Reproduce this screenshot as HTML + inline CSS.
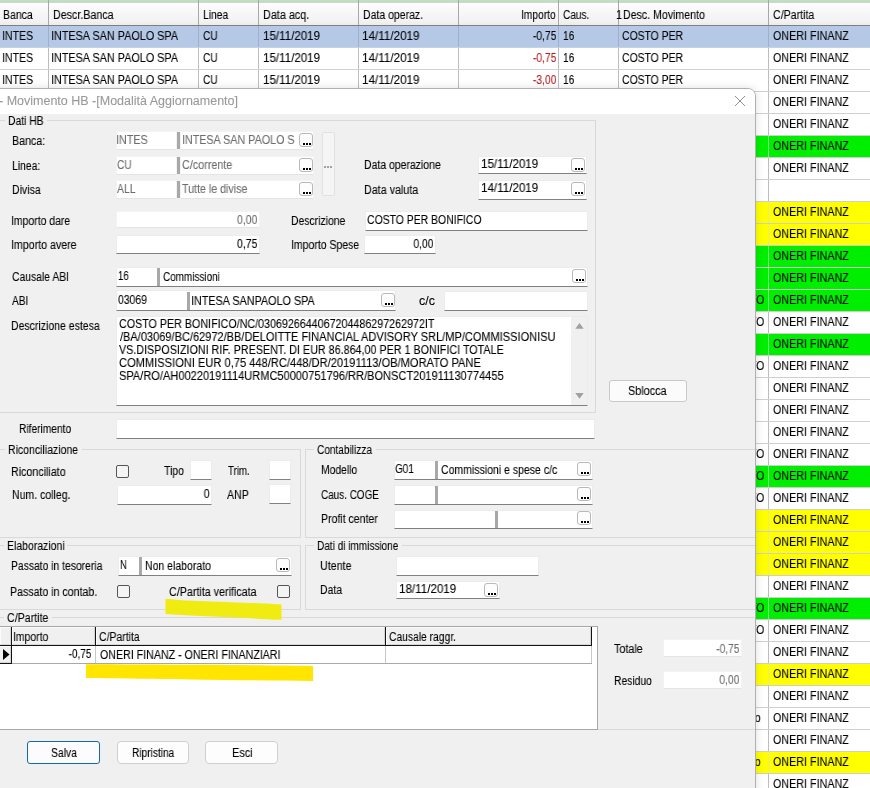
<!DOCTYPE html>
<html><head><meta charset="utf-8"><style>
*{margin:0;padding:0;box-sizing:border-box}
html,body{width:870px;height:788px;overflow:hidden;background:#fff}
body{position:relative;font-family:"Liberation Sans",sans-serif;font-size:12px;color:#000}
.t{position:absolute;white-space:pre;line-height:14px;transform-origin:0 0;-webkit-font-smoothing:antialiased;will-change:transform;-webkit-text-stroke:0.1px currentColor}
.b{position:absolute}
#dlg{position:absolute;left:-20px;top:88px;width:776px;height:720px;overflow:hidden;border-top-right-radius:8px;box-shadow:0 0 9px rgba(0,0,0,0.13);border:1px solid #b0b0b0;background:#fff}
#dlgin{position:absolute;left:19px;top:-89px;width:870px;height:900px}
</style></head>
<body>
<div class="b" style="left:0px;top:0px;width:870px;height:25px;background:linear-gradient(#ffffff,#f2f2f2 85%,#ececec);"></div>
<div class="b" style="left:0px;top:0px;width:870px;height:3px;background:#c4dcc4;"></div>
<div class="b" style="left:0px;top:25px;width:870px;height:1px;background:#7f7f7f;"></div>
<div class="b" style="left:48px;top:0px;width:1px;height:25px;background:#a8a8a8;"></div>
<div class="b" style="left:198px;top:0px;width:1px;height:25px;background:#a8a8a8;"></div>
<div class="b" style="left:258px;top:0px;width:1px;height:25px;background:#a8a8a8;"></div>
<div class="b" style="left:358px;top:0px;width:1px;height:25px;background:#a8a8a8;"></div>
<div class="b" style="left:458px;top:0px;width:1px;height:25px;background:#a8a8a8;"></div>
<div class="b" style="left:558px;top:0px;width:1px;height:25px;background:#a8a8a8;"></div>
<div class="b" style="left:618px;top:0px;width:1px;height:25px;background:#a8a8a8;"></div>
<div class="b" style="left:768px;top:0px;width:1px;height:25px;background:#a8a8a8;"></div>
<div class="t" style="top:8.00px;left:2.80px;transform:scaleX(0.8762);">Banca</div>
<div class="t" style="top:8.00px;left:52.90px;transform:scaleX(0.8909);">Descr.Banca</div>
<div class="t" style="top:8.00px;left:202.60px;transform:scaleX(0.8556);">Linea</div>
<div class="t" style="top:8.00px;left:262.60px;transform:scaleX(0.9014);">Data acq.</div>
<div class="t" style="top:8.00px;left:362.60px;transform:scaleX(0.8746);">Data operaz.</div>
<div class="t" style="top:8.00px;left:622.80px;transform:scaleX(0.8837);">Desc. Movimento</div>
<div class="t" style="top:8.00px;left:772.50px;transform:scaleX(0.8828);">C/Partita</div>
<div class="t" style="top:8.00px;left:562.50px;transform:scaleX(0.8383);">Caus.</div>
<div class="t" style="top:8.00px;right:314.38px;transform:scaleX(0.8523);transform-origin:100% 0;">Importo</div>
<div class="t" style="top:8.00px;left:616.00px;transform:scaleX(0.9000);">1</div>
<div class="b" style="left:0px;top:26px;width:870px;height:21px;background:#b5c9e7;"></div>
<div class="b" style="left:0px;top:47px;width:870px;height:1px;background:#c4d2e6;"></div>
<div class="b" style="left:48px;top:26px;width:1px;height:21px;background:rgba(0,0,0,0.12);"></div>
<div class="b" style="left:198px;top:26px;width:1px;height:21px;background:rgba(0,0,0,0.12);"></div>
<div class="b" style="left:258px;top:26px;width:1px;height:21px;background:rgba(0,0,0,0.12);"></div>
<div class="b" style="left:358px;top:26px;width:1px;height:21px;background:rgba(0,0,0,0.12);"></div>
<div class="b" style="left:458px;top:26px;width:1px;height:21px;background:rgba(0,0,0,0.12);"></div>
<div class="b" style="left:558px;top:26px;width:1px;height:21px;background:rgba(0,0,0,0.12);"></div>
<div class="b" style="left:618px;top:26px;width:1px;height:21px;background:rgba(0,0,0,0.12);"></div>
<div class="b" style="left:768px;top:26px;width:1px;height:21px;background:rgba(0,0,0,0.12);"></div>
<div class="b" style="left:0px;top:48px;width:870px;height:21px;background:#ffffff;"></div>
<div class="b" style="left:0px;top:69px;width:870px;height:1px;background:#d0d0d0;"></div>
<div class="b" style="left:48px;top:48px;width:1px;height:21px;background:#bdbdbd;"></div>
<div class="b" style="left:198px;top:48px;width:1px;height:21px;background:#bdbdbd;"></div>
<div class="b" style="left:258px;top:48px;width:1px;height:21px;background:#bdbdbd;"></div>
<div class="b" style="left:358px;top:48px;width:1px;height:21px;background:#bdbdbd;"></div>
<div class="b" style="left:458px;top:48px;width:1px;height:21px;background:#bdbdbd;"></div>
<div class="b" style="left:558px;top:48px;width:1px;height:21px;background:#bdbdbd;"></div>
<div class="b" style="left:618px;top:48px;width:1px;height:21px;background:#bdbdbd;"></div>
<div class="b" style="left:768px;top:48px;width:1px;height:21px;background:#bdbdbd;"></div>
<div class="b" style="left:0px;top:70px;width:870px;height:21px;background:#ffffff;"></div>
<div class="b" style="left:0px;top:91px;width:870px;height:1px;background:#d0d0d0;"></div>
<div class="b" style="left:48px;top:70px;width:1px;height:21px;background:#bdbdbd;"></div>
<div class="b" style="left:198px;top:70px;width:1px;height:21px;background:#bdbdbd;"></div>
<div class="b" style="left:258px;top:70px;width:1px;height:21px;background:#bdbdbd;"></div>
<div class="b" style="left:358px;top:70px;width:1px;height:21px;background:#bdbdbd;"></div>
<div class="b" style="left:458px;top:70px;width:1px;height:21px;background:#bdbdbd;"></div>
<div class="b" style="left:558px;top:70px;width:1px;height:21px;background:#bdbdbd;"></div>
<div class="b" style="left:618px;top:70px;width:1px;height:21px;background:#bdbdbd;"></div>
<div class="b" style="left:768px;top:70px;width:1px;height:21px;background:#bdbdbd;"></div>
<div class="b" style="left:0px;top:92px;width:870px;height:21px;background:#ffffff;"></div>
<div class="b" style="left:0px;top:113px;width:870px;height:1px;background:#d0d0d0;"></div>
<div class="b" style="left:48px;top:92px;width:1px;height:21px;background:#bdbdbd;"></div>
<div class="b" style="left:198px;top:92px;width:1px;height:21px;background:#bdbdbd;"></div>
<div class="b" style="left:258px;top:92px;width:1px;height:21px;background:#bdbdbd;"></div>
<div class="b" style="left:358px;top:92px;width:1px;height:21px;background:#bdbdbd;"></div>
<div class="b" style="left:458px;top:92px;width:1px;height:21px;background:#bdbdbd;"></div>
<div class="b" style="left:558px;top:92px;width:1px;height:21px;background:#bdbdbd;"></div>
<div class="b" style="left:618px;top:92px;width:1px;height:21px;background:#bdbdbd;"></div>
<div class="b" style="left:768px;top:92px;width:1px;height:21px;background:#bdbdbd;"></div>
<div class="b" style="left:0px;top:114px;width:870px;height:21px;background:#ffffff;"></div>
<div class="b" style="left:0px;top:135px;width:870px;height:1px;background:#d0d0d0;"></div>
<div class="b" style="left:48px;top:114px;width:1px;height:21px;background:#bdbdbd;"></div>
<div class="b" style="left:198px;top:114px;width:1px;height:21px;background:#bdbdbd;"></div>
<div class="b" style="left:258px;top:114px;width:1px;height:21px;background:#bdbdbd;"></div>
<div class="b" style="left:358px;top:114px;width:1px;height:21px;background:#bdbdbd;"></div>
<div class="b" style="left:458px;top:114px;width:1px;height:21px;background:#bdbdbd;"></div>
<div class="b" style="left:558px;top:114px;width:1px;height:21px;background:#bdbdbd;"></div>
<div class="b" style="left:618px;top:114px;width:1px;height:21px;background:#bdbdbd;"></div>
<div class="b" style="left:768px;top:114px;width:1px;height:21px;background:#bdbdbd;"></div>
<div class="b" style="left:0px;top:136px;width:870px;height:21px;background:#00ef00;"></div>
<div class="b" style="left:0px;top:157px;width:870px;height:1px;background:rgba(190,190,190,0.75);"></div>
<div class="b" style="left:48px;top:136px;width:1px;height:21px;background:rgba(220,220,220,0.6);"></div>
<div class="b" style="left:198px;top:136px;width:1px;height:21px;background:rgba(220,220,220,0.6);"></div>
<div class="b" style="left:258px;top:136px;width:1px;height:21px;background:rgba(220,220,220,0.6);"></div>
<div class="b" style="left:358px;top:136px;width:1px;height:21px;background:rgba(220,220,220,0.6);"></div>
<div class="b" style="left:458px;top:136px;width:1px;height:21px;background:rgba(220,220,220,0.6);"></div>
<div class="b" style="left:558px;top:136px;width:1px;height:21px;background:rgba(220,220,220,0.6);"></div>
<div class="b" style="left:618px;top:136px;width:1px;height:21px;background:rgba(220,220,220,0.6);"></div>
<div class="b" style="left:768px;top:136px;width:1px;height:21px;background:rgba(220,220,220,0.6);"></div>
<div class="b" style="left:0px;top:158px;width:870px;height:21px;background:#ffffff;"></div>
<div class="b" style="left:0px;top:179px;width:870px;height:1px;background:#d0d0d0;"></div>
<div class="b" style="left:48px;top:158px;width:1px;height:21px;background:#bdbdbd;"></div>
<div class="b" style="left:198px;top:158px;width:1px;height:21px;background:#bdbdbd;"></div>
<div class="b" style="left:258px;top:158px;width:1px;height:21px;background:#bdbdbd;"></div>
<div class="b" style="left:358px;top:158px;width:1px;height:21px;background:#bdbdbd;"></div>
<div class="b" style="left:458px;top:158px;width:1px;height:21px;background:#bdbdbd;"></div>
<div class="b" style="left:558px;top:158px;width:1px;height:21px;background:#bdbdbd;"></div>
<div class="b" style="left:618px;top:158px;width:1px;height:21px;background:#bdbdbd;"></div>
<div class="b" style="left:768px;top:158px;width:1px;height:21px;background:#bdbdbd;"></div>
<div class="b" style="left:0px;top:180px;width:870px;height:21px;background:#ffffff;"></div>
<div class="b" style="left:0px;top:201px;width:870px;height:1px;background:#d0d0d0;"></div>
<div class="b" style="left:48px;top:180px;width:1px;height:21px;background:#bdbdbd;"></div>
<div class="b" style="left:198px;top:180px;width:1px;height:21px;background:#bdbdbd;"></div>
<div class="b" style="left:258px;top:180px;width:1px;height:21px;background:#bdbdbd;"></div>
<div class="b" style="left:358px;top:180px;width:1px;height:21px;background:#bdbdbd;"></div>
<div class="b" style="left:458px;top:180px;width:1px;height:21px;background:#bdbdbd;"></div>
<div class="b" style="left:558px;top:180px;width:1px;height:21px;background:#bdbdbd;"></div>
<div class="b" style="left:618px;top:180px;width:1px;height:21px;background:#bdbdbd;"></div>
<div class="b" style="left:768px;top:180px;width:1px;height:21px;background:#bdbdbd;"></div>
<div class="b" style="left:0px;top:202px;width:870px;height:21px;background:#ffff00;"></div>
<div class="b" style="left:0px;top:223px;width:870px;height:1px;background:rgba(190,190,190,0.75);"></div>
<div class="b" style="left:48px;top:202px;width:1px;height:21px;background:rgba(220,220,220,0.6);"></div>
<div class="b" style="left:198px;top:202px;width:1px;height:21px;background:rgba(220,220,220,0.6);"></div>
<div class="b" style="left:258px;top:202px;width:1px;height:21px;background:rgba(220,220,220,0.6);"></div>
<div class="b" style="left:358px;top:202px;width:1px;height:21px;background:rgba(220,220,220,0.6);"></div>
<div class="b" style="left:458px;top:202px;width:1px;height:21px;background:rgba(220,220,220,0.6);"></div>
<div class="b" style="left:558px;top:202px;width:1px;height:21px;background:rgba(220,220,220,0.6);"></div>
<div class="b" style="left:618px;top:202px;width:1px;height:21px;background:rgba(220,220,220,0.6);"></div>
<div class="b" style="left:768px;top:202px;width:1px;height:21px;background:rgba(220,220,220,0.6);"></div>
<div class="b" style="left:0px;top:224px;width:870px;height:21px;background:#ffff00;"></div>
<div class="b" style="left:0px;top:245px;width:870px;height:1px;background:rgba(190,190,190,0.75);"></div>
<div class="b" style="left:48px;top:224px;width:1px;height:21px;background:rgba(220,220,220,0.6);"></div>
<div class="b" style="left:198px;top:224px;width:1px;height:21px;background:rgba(220,220,220,0.6);"></div>
<div class="b" style="left:258px;top:224px;width:1px;height:21px;background:rgba(220,220,220,0.6);"></div>
<div class="b" style="left:358px;top:224px;width:1px;height:21px;background:rgba(220,220,220,0.6);"></div>
<div class="b" style="left:458px;top:224px;width:1px;height:21px;background:rgba(220,220,220,0.6);"></div>
<div class="b" style="left:558px;top:224px;width:1px;height:21px;background:rgba(220,220,220,0.6);"></div>
<div class="b" style="left:618px;top:224px;width:1px;height:21px;background:rgba(220,220,220,0.6);"></div>
<div class="b" style="left:768px;top:224px;width:1px;height:21px;background:rgba(220,220,220,0.6);"></div>
<div class="b" style="left:0px;top:246px;width:870px;height:21px;background:#00ef00;"></div>
<div class="b" style="left:0px;top:267px;width:870px;height:1px;background:rgba(190,190,190,0.75);"></div>
<div class="b" style="left:48px;top:246px;width:1px;height:21px;background:rgba(220,220,220,0.6);"></div>
<div class="b" style="left:198px;top:246px;width:1px;height:21px;background:rgba(220,220,220,0.6);"></div>
<div class="b" style="left:258px;top:246px;width:1px;height:21px;background:rgba(220,220,220,0.6);"></div>
<div class="b" style="left:358px;top:246px;width:1px;height:21px;background:rgba(220,220,220,0.6);"></div>
<div class="b" style="left:458px;top:246px;width:1px;height:21px;background:rgba(220,220,220,0.6);"></div>
<div class="b" style="left:558px;top:246px;width:1px;height:21px;background:rgba(220,220,220,0.6);"></div>
<div class="b" style="left:618px;top:246px;width:1px;height:21px;background:rgba(220,220,220,0.6);"></div>
<div class="b" style="left:768px;top:246px;width:1px;height:21px;background:rgba(220,220,220,0.6);"></div>
<div class="b" style="left:0px;top:268px;width:870px;height:21px;background:#00ef00;"></div>
<div class="b" style="left:0px;top:289px;width:870px;height:1px;background:rgba(190,190,190,0.75);"></div>
<div class="b" style="left:48px;top:268px;width:1px;height:21px;background:rgba(220,220,220,0.6);"></div>
<div class="b" style="left:198px;top:268px;width:1px;height:21px;background:rgba(220,220,220,0.6);"></div>
<div class="b" style="left:258px;top:268px;width:1px;height:21px;background:rgba(220,220,220,0.6);"></div>
<div class="b" style="left:358px;top:268px;width:1px;height:21px;background:rgba(220,220,220,0.6);"></div>
<div class="b" style="left:458px;top:268px;width:1px;height:21px;background:rgba(220,220,220,0.6);"></div>
<div class="b" style="left:558px;top:268px;width:1px;height:21px;background:rgba(220,220,220,0.6);"></div>
<div class="b" style="left:618px;top:268px;width:1px;height:21px;background:rgba(220,220,220,0.6);"></div>
<div class="b" style="left:768px;top:268px;width:1px;height:21px;background:rgba(220,220,220,0.6);"></div>
<div class="b" style="left:0px;top:290px;width:870px;height:21px;background:#00ef00;"></div>
<div class="b" style="left:0px;top:311px;width:870px;height:1px;background:rgba(190,190,190,0.75);"></div>
<div class="b" style="left:48px;top:290px;width:1px;height:21px;background:rgba(220,220,220,0.6);"></div>
<div class="b" style="left:198px;top:290px;width:1px;height:21px;background:rgba(220,220,220,0.6);"></div>
<div class="b" style="left:258px;top:290px;width:1px;height:21px;background:rgba(220,220,220,0.6);"></div>
<div class="b" style="left:358px;top:290px;width:1px;height:21px;background:rgba(220,220,220,0.6);"></div>
<div class="b" style="left:458px;top:290px;width:1px;height:21px;background:rgba(220,220,220,0.6);"></div>
<div class="b" style="left:558px;top:290px;width:1px;height:21px;background:rgba(220,220,220,0.6);"></div>
<div class="b" style="left:618px;top:290px;width:1px;height:21px;background:rgba(220,220,220,0.6);"></div>
<div class="b" style="left:768px;top:290px;width:1px;height:21px;background:rgba(220,220,220,0.6);"></div>
<div class="b" style="left:0px;top:312px;width:870px;height:21px;background:#ffffff;"></div>
<div class="b" style="left:0px;top:333px;width:870px;height:1px;background:#d0d0d0;"></div>
<div class="b" style="left:48px;top:312px;width:1px;height:21px;background:#bdbdbd;"></div>
<div class="b" style="left:198px;top:312px;width:1px;height:21px;background:#bdbdbd;"></div>
<div class="b" style="left:258px;top:312px;width:1px;height:21px;background:#bdbdbd;"></div>
<div class="b" style="left:358px;top:312px;width:1px;height:21px;background:#bdbdbd;"></div>
<div class="b" style="left:458px;top:312px;width:1px;height:21px;background:#bdbdbd;"></div>
<div class="b" style="left:558px;top:312px;width:1px;height:21px;background:#bdbdbd;"></div>
<div class="b" style="left:618px;top:312px;width:1px;height:21px;background:#bdbdbd;"></div>
<div class="b" style="left:768px;top:312px;width:1px;height:21px;background:#bdbdbd;"></div>
<div class="b" style="left:0px;top:334px;width:870px;height:21px;background:#00ef00;"></div>
<div class="b" style="left:0px;top:355px;width:870px;height:1px;background:rgba(190,190,190,0.75);"></div>
<div class="b" style="left:48px;top:334px;width:1px;height:21px;background:rgba(220,220,220,0.6);"></div>
<div class="b" style="left:198px;top:334px;width:1px;height:21px;background:rgba(220,220,220,0.6);"></div>
<div class="b" style="left:258px;top:334px;width:1px;height:21px;background:rgba(220,220,220,0.6);"></div>
<div class="b" style="left:358px;top:334px;width:1px;height:21px;background:rgba(220,220,220,0.6);"></div>
<div class="b" style="left:458px;top:334px;width:1px;height:21px;background:rgba(220,220,220,0.6);"></div>
<div class="b" style="left:558px;top:334px;width:1px;height:21px;background:rgba(220,220,220,0.6);"></div>
<div class="b" style="left:618px;top:334px;width:1px;height:21px;background:rgba(220,220,220,0.6);"></div>
<div class="b" style="left:768px;top:334px;width:1px;height:21px;background:rgba(220,220,220,0.6);"></div>
<div class="b" style="left:0px;top:356px;width:870px;height:21px;background:#ffffff;"></div>
<div class="b" style="left:0px;top:377px;width:870px;height:1px;background:#d0d0d0;"></div>
<div class="b" style="left:48px;top:356px;width:1px;height:21px;background:#bdbdbd;"></div>
<div class="b" style="left:198px;top:356px;width:1px;height:21px;background:#bdbdbd;"></div>
<div class="b" style="left:258px;top:356px;width:1px;height:21px;background:#bdbdbd;"></div>
<div class="b" style="left:358px;top:356px;width:1px;height:21px;background:#bdbdbd;"></div>
<div class="b" style="left:458px;top:356px;width:1px;height:21px;background:#bdbdbd;"></div>
<div class="b" style="left:558px;top:356px;width:1px;height:21px;background:#bdbdbd;"></div>
<div class="b" style="left:618px;top:356px;width:1px;height:21px;background:#bdbdbd;"></div>
<div class="b" style="left:768px;top:356px;width:1px;height:21px;background:#bdbdbd;"></div>
<div class="b" style="left:0px;top:378px;width:870px;height:21px;background:#ffffff;"></div>
<div class="b" style="left:0px;top:399px;width:870px;height:1px;background:#d0d0d0;"></div>
<div class="b" style="left:48px;top:378px;width:1px;height:21px;background:#bdbdbd;"></div>
<div class="b" style="left:198px;top:378px;width:1px;height:21px;background:#bdbdbd;"></div>
<div class="b" style="left:258px;top:378px;width:1px;height:21px;background:#bdbdbd;"></div>
<div class="b" style="left:358px;top:378px;width:1px;height:21px;background:#bdbdbd;"></div>
<div class="b" style="left:458px;top:378px;width:1px;height:21px;background:#bdbdbd;"></div>
<div class="b" style="left:558px;top:378px;width:1px;height:21px;background:#bdbdbd;"></div>
<div class="b" style="left:618px;top:378px;width:1px;height:21px;background:#bdbdbd;"></div>
<div class="b" style="left:768px;top:378px;width:1px;height:21px;background:#bdbdbd;"></div>
<div class="b" style="left:0px;top:400px;width:870px;height:21px;background:#ffffff;"></div>
<div class="b" style="left:0px;top:421px;width:870px;height:1px;background:#d0d0d0;"></div>
<div class="b" style="left:48px;top:400px;width:1px;height:21px;background:#bdbdbd;"></div>
<div class="b" style="left:198px;top:400px;width:1px;height:21px;background:#bdbdbd;"></div>
<div class="b" style="left:258px;top:400px;width:1px;height:21px;background:#bdbdbd;"></div>
<div class="b" style="left:358px;top:400px;width:1px;height:21px;background:#bdbdbd;"></div>
<div class="b" style="left:458px;top:400px;width:1px;height:21px;background:#bdbdbd;"></div>
<div class="b" style="left:558px;top:400px;width:1px;height:21px;background:#bdbdbd;"></div>
<div class="b" style="left:618px;top:400px;width:1px;height:21px;background:#bdbdbd;"></div>
<div class="b" style="left:768px;top:400px;width:1px;height:21px;background:#bdbdbd;"></div>
<div class="b" style="left:0px;top:422px;width:870px;height:21px;background:#ffffff;"></div>
<div class="b" style="left:0px;top:443px;width:870px;height:1px;background:#d0d0d0;"></div>
<div class="b" style="left:48px;top:422px;width:1px;height:21px;background:#bdbdbd;"></div>
<div class="b" style="left:198px;top:422px;width:1px;height:21px;background:#bdbdbd;"></div>
<div class="b" style="left:258px;top:422px;width:1px;height:21px;background:#bdbdbd;"></div>
<div class="b" style="left:358px;top:422px;width:1px;height:21px;background:#bdbdbd;"></div>
<div class="b" style="left:458px;top:422px;width:1px;height:21px;background:#bdbdbd;"></div>
<div class="b" style="left:558px;top:422px;width:1px;height:21px;background:#bdbdbd;"></div>
<div class="b" style="left:618px;top:422px;width:1px;height:21px;background:#bdbdbd;"></div>
<div class="b" style="left:768px;top:422px;width:1px;height:21px;background:#bdbdbd;"></div>
<div class="b" style="left:0px;top:444px;width:870px;height:21px;background:#ffffff;"></div>
<div class="b" style="left:0px;top:465px;width:870px;height:1px;background:#d0d0d0;"></div>
<div class="b" style="left:48px;top:444px;width:1px;height:21px;background:#bdbdbd;"></div>
<div class="b" style="left:198px;top:444px;width:1px;height:21px;background:#bdbdbd;"></div>
<div class="b" style="left:258px;top:444px;width:1px;height:21px;background:#bdbdbd;"></div>
<div class="b" style="left:358px;top:444px;width:1px;height:21px;background:#bdbdbd;"></div>
<div class="b" style="left:458px;top:444px;width:1px;height:21px;background:#bdbdbd;"></div>
<div class="b" style="left:558px;top:444px;width:1px;height:21px;background:#bdbdbd;"></div>
<div class="b" style="left:618px;top:444px;width:1px;height:21px;background:#bdbdbd;"></div>
<div class="b" style="left:768px;top:444px;width:1px;height:21px;background:#bdbdbd;"></div>
<div class="b" style="left:0px;top:466px;width:870px;height:21px;background:#00ef00;"></div>
<div class="b" style="left:0px;top:487px;width:870px;height:1px;background:rgba(190,190,190,0.75);"></div>
<div class="b" style="left:48px;top:466px;width:1px;height:21px;background:rgba(220,220,220,0.6);"></div>
<div class="b" style="left:198px;top:466px;width:1px;height:21px;background:rgba(220,220,220,0.6);"></div>
<div class="b" style="left:258px;top:466px;width:1px;height:21px;background:rgba(220,220,220,0.6);"></div>
<div class="b" style="left:358px;top:466px;width:1px;height:21px;background:rgba(220,220,220,0.6);"></div>
<div class="b" style="left:458px;top:466px;width:1px;height:21px;background:rgba(220,220,220,0.6);"></div>
<div class="b" style="left:558px;top:466px;width:1px;height:21px;background:rgba(220,220,220,0.6);"></div>
<div class="b" style="left:618px;top:466px;width:1px;height:21px;background:rgba(220,220,220,0.6);"></div>
<div class="b" style="left:768px;top:466px;width:1px;height:21px;background:rgba(220,220,220,0.6);"></div>
<div class="b" style="left:0px;top:488px;width:870px;height:21px;background:#ffffff;"></div>
<div class="b" style="left:0px;top:509px;width:870px;height:1px;background:#d0d0d0;"></div>
<div class="b" style="left:48px;top:488px;width:1px;height:21px;background:#bdbdbd;"></div>
<div class="b" style="left:198px;top:488px;width:1px;height:21px;background:#bdbdbd;"></div>
<div class="b" style="left:258px;top:488px;width:1px;height:21px;background:#bdbdbd;"></div>
<div class="b" style="left:358px;top:488px;width:1px;height:21px;background:#bdbdbd;"></div>
<div class="b" style="left:458px;top:488px;width:1px;height:21px;background:#bdbdbd;"></div>
<div class="b" style="left:558px;top:488px;width:1px;height:21px;background:#bdbdbd;"></div>
<div class="b" style="left:618px;top:488px;width:1px;height:21px;background:#bdbdbd;"></div>
<div class="b" style="left:768px;top:488px;width:1px;height:21px;background:#bdbdbd;"></div>
<div class="b" style="left:0px;top:510px;width:870px;height:21px;background:#ffff00;"></div>
<div class="b" style="left:0px;top:531px;width:870px;height:1px;background:rgba(190,190,190,0.75);"></div>
<div class="b" style="left:48px;top:510px;width:1px;height:21px;background:rgba(220,220,220,0.6);"></div>
<div class="b" style="left:198px;top:510px;width:1px;height:21px;background:rgba(220,220,220,0.6);"></div>
<div class="b" style="left:258px;top:510px;width:1px;height:21px;background:rgba(220,220,220,0.6);"></div>
<div class="b" style="left:358px;top:510px;width:1px;height:21px;background:rgba(220,220,220,0.6);"></div>
<div class="b" style="left:458px;top:510px;width:1px;height:21px;background:rgba(220,220,220,0.6);"></div>
<div class="b" style="left:558px;top:510px;width:1px;height:21px;background:rgba(220,220,220,0.6);"></div>
<div class="b" style="left:618px;top:510px;width:1px;height:21px;background:rgba(220,220,220,0.6);"></div>
<div class="b" style="left:768px;top:510px;width:1px;height:21px;background:rgba(220,220,220,0.6);"></div>
<div class="b" style="left:0px;top:532px;width:870px;height:21px;background:#ffff00;"></div>
<div class="b" style="left:0px;top:553px;width:870px;height:1px;background:rgba(190,190,190,0.75);"></div>
<div class="b" style="left:48px;top:532px;width:1px;height:21px;background:rgba(220,220,220,0.6);"></div>
<div class="b" style="left:198px;top:532px;width:1px;height:21px;background:rgba(220,220,220,0.6);"></div>
<div class="b" style="left:258px;top:532px;width:1px;height:21px;background:rgba(220,220,220,0.6);"></div>
<div class="b" style="left:358px;top:532px;width:1px;height:21px;background:rgba(220,220,220,0.6);"></div>
<div class="b" style="left:458px;top:532px;width:1px;height:21px;background:rgba(220,220,220,0.6);"></div>
<div class="b" style="left:558px;top:532px;width:1px;height:21px;background:rgba(220,220,220,0.6);"></div>
<div class="b" style="left:618px;top:532px;width:1px;height:21px;background:rgba(220,220,220,0.6);"></div>
<div class="b" style="left:768px;top:532px;width:1px;height:21px;background:rgba(220,220,220,0.6);"></div>
<div class="b" style="left:0px;top:554px;width:870px;height:21px;background:#ffff00;"></div>
<div class="b" style="left:0px;top:575px;width:870px;height:1px;background:rgba(190,190,190,0.75);"></div>
<div class="b" style="left:48px;top:554px;width:1px;height:21px;background:rgba(220,220,220,0.6);"></div>
<div class="b" style="left:198px;top:554px;width:1px;height:21px;background:rgba(220,220,220,0.6);"></div>
<div class="b" style="left:258px;top:554px;width:1px;height:21px;background:rgba(220,220,220,0.6);"></div>
<div class="b" style="left:358px;top:554px;width:1px;height:21px;background:rgba(220,220,220,0.6);"></div>
<div class="b" style="left:458px;top:554px;width:1px;height:21px;background:rgba(220,220,220,0.6);"></div>
<div class="b" style="left:558px;top:554px;width:1px;height:21px;background:rgba(220,220,220,0.6);"></div>
<div class="b" style="left:618px;top:554px;width:1px;height:21px;background:rgba(220,220,220,0.6);"></div>
<div class="b" style="left:768px;top:554px;width:1px;height:21px;background:rgba(220,220,220,0.6);"></div>
<div class="b" style="left:0px;top:576px;width:870px;height:21px;background:#ffffff;"></div>
<div class="b" style="left:0px;top:597px;width:870px;height:1px;background:#d0d0d0;"></div>
<div class="b" style="left:48px;top:576px;width:1px;height:21px;background:#bdbdbd;"></div>
<div class="b" style="left:198px;top:576px;width:1px;height:21px;background:#bdbdbd;"></div>
<div class="b" style="left:258px;top:576px;width:1px;height:21px;background:#bdbdbd;"></div>
<div class="b" style="left:358px;top:576px;width:1px;height:21px;background:#bdbdbd;"></div>
<div class="b" style="left:458px;top:576px;width:1px;height:21px;background:#bdbdbd;"></div>
<div class="b" style="left:558px;top:576px;width:1px;height:21px;background:#bdbdbd;"></div>
<div class="b" style="left:618px;top:576px;width:1px;height:21px;background:#bdbdbd;"></div>
<div class="b" style="left:768px;top:576px;width:1px;height:21px;background:#bdbdbd;"></div>
<div class="b" style="left:0px;top:598px;width:870px;height:21px;background:#00ef00;"></div>
<div class="b" style="left:0px;top:619px;width:870px;height:1px;background:rgba(190,190,190,0.75);"></div>
<div class="b" style="left:48px;top:598px;width:1px;height:21px;background:rgba(220,220,220,0.6);"></div>
<div class="b" style="left:198px;top:598px;width:1px;height:21px;background:rgba(220,220,220,0.6);"></div>
<div class="b" style="left:258px;top:598px;width:1px;height:21px;background:rgba(220,220,220,0.6);"></div>
<div class="b" style="left:358px;top:598px;width:1px;height:21px;background:rgba(220,220,220,0.6);"></div>
<div class="b" style="left:458px;top:598px;width:1px;height:21px;background:rgba(220,220,220,0.6);"></div>
<div class="b" style="left:558px;top:598px;width:1px;height:21px;background:rgba(220,220,220,0.6);"></div>
<div class="b" style="left:618px;top:598px;width:1px;height:21px;background:rgba(220,220,220,0.6);"></div>
<div class="b" style="left:768px;top:598px;width:1px;height:21px;background:rgba(220,220,220,0.6);"></div>
<div class="b" style="left:0px;top:620px;width:870px;height:21px;background:#ffffff;"></div>
<div class="b" style="left:0px;top:641px;width:870px;height:1px;background:#d0d0d0;"></div>
<div class="b" style="left:48px;top:620px;width:1px;height:21px;background:#bdbdbd;"></div>
<div class="b" style="left:198px;top:620px;width:1px;height:21px;background:#bdbdbd;"></div>
<div class="b" style="left:258px;top:620px;width:1px;height:21px;background:#bdbdbd;"></div>
<div class="b" style="left:358px;top:620px;width:1px;height:21px;background:#bdbdbd;"></div>
<div class="b" style="left:458px;top:620px;width:1px;height:21px;background:#bdbdbd;"></div>
<div class="b" style="left:558px;top:620px;width:1px;height:21px;background:#bdbdbd;"></div>
<div class="b" style="left:618px;top:620px;width:1px;height:21px;background:#bdbdbd;"></div>
<div class="b" style="left:768px;top:620px;width:1px;height:21px;background:#bdbdbd;"></div>
<div class="b" style="left:0px;top:642px;width:870px;height:21px;background:#ffffff;"></div>
<div class="b" style="left:0px;top:663px;width:870px;height:1px;background:#d0d0d0;"></div>
<div class="b" style="left:48px;top:642px;width:1px;height:21px;background:#bdbdbd;"></div>
<div class="b" style="left:198px;top:642px;width:1px;height:21px;background:#bdbdbd;"></div>
<div class="b" style="left:258px;top:642px;width:1px;height:21px;background:#bdbdbd;"></div>
<div class="b" style="left:358px;top:642px;width:1px;height:21px;background:#bdbdbd;"></div>
<div class="b" style="left:458px;top:642px;width:1px;height:21px;background:#bdbdbd;"></div>
<div class="b" style="left:558px;top:642px;width:1px;height:21px;background:#bdbdbd;"></div>
<div class="b" style="left:618px;top:642px;width:1px;height:21px;background:#bdbdbd;"></div>
<div class="b" style="left:768px;top:642px;width:1px;height:21px;background:#bdbdbd;"></div>
<div class="b" style="left:0px;top:664px;width:870px;height:21px;background:#ffff00;"></div>
<div class="b" style="left:0px;top:685px;width:870px;height:1px;background:rgba(190,190,190,0.75);"></div>
<div class="b" style="left:48px;top:664px;width:1px;height:21px;background:rgba(220,220,220,0.6);"></div>
<div class="b" style="left:198px;top:664px;width:1px;height:21px;background:rgba(220,220,220,0.6);"></div>
<div class="b" style="left:258px;top:664px;width:1px;height:21px;background:rgba(220,220,220,0.6);"></div>
<div class="b" style="left:358px;top:664px;width:1px;height:21px;background:rgba(220,220,220,0.6);"></div>
<div class="b" style="left:458px;top:664px;width:1px;height:21px;background:rgba(220,220,220,0.6);"></div>
<div class="b" style="left:558px;top:664px;width:1px;height:21px;background:rgba(220,220,220,0.6);"></div>
<div class="b" style="left:618px;top:664px;width:1px;height:21px;background:rgba(220,220,220,0.6);"></div>
<div class="b" style="left:768px;top:664px;width:1px;height:21px;background:rgba(220,220,220,0.6);"></div>
<div class="b" style="left:0px;top:686px;width:870px;height:21px;background:#ffffff;"></div>
<div class="b" style="left:0px;top:707px;width:870px;height:1px;background:#d0d0d0;"></div>
<div class="b" style="left:48px;top:686px;width:1px;height:21px;background:#bdbdbd;"></div>
<div class="b" style="left:198px;top:686px;width:1px;height:21px;background:#bdbdbd;"></div>
<div class="b" style="left:258px;top:686px;width:1px;height:21px;background:#bdbdbd;"></div>
<div class="b" style="left:358px;top:686px;width:1px;height:21px;background:#bdbdbd;"></div>
<div class="b" style="left:458px;top:686px;width:1px;height:21px;background:#bdbdbd;"></div>
<div class="b" style="left:558px;top:686px;width:1px;height:21px;background:#bdbdbd;"></div>
<div class="b" style="left:618px;top:686px;width:1px;height:21px;background:#bdbdbd;"></div>
<div class="b" style="left:768px;top:686px;width:1px;height:21px;background:#bdbdbd;"></div>
<div class="b" style="left:0px;top:708px;width:870px;height:21px;background:#ffffff;"></div>
<div class="b" style="left:0px;top:729px;width:870px;height:1px;background:#d0d0d0;"></div>
<div class="b" style="left:48px;top:708px;width:1px;height:21px;background:#bdbdbd;"></div>
<div class="b" style="left:198px;top:708px;width:1px;height:21px;background:#bdbdbd;"></div>
<div class="b" style="left:258px;top:708px;width:1px;height:21px;background:#bdbdbd;"></div>
<div class="b" style="left:358px;top:708px;width:1px;height:21px;background:#bdbdbd;"></div>
<div class="b" style="left:458px;top:708px;width:1px;height:21px;background:#bdbdbd;"></div>
<div class="b" style="left:558px;top:708px;width:1px;height:21px;background:#bdbdbd;"></div>
<div class="b" style="left:618px;top:708px;width:1px;height:21px;background:#bdbdbd;"></div>
<div class="b" style="left:768px;top:708px;width:1px;height:21px;background:#bdbdbd;"></div>
<div class="b" style="left:0px;top:730px;width:870px;height:21px;background:#ffffff;"></div>
<div class="b" style="left:0px;top:751px;width:870px;height:1px;background:#d0d0d0;"></div>
<div class="b" style="left:48px;top:730px;width:1px;height:21px;background:#bdbdbd;"></div>
<div class="b" style="left:198px;top:730px;width:1px;height:21px;background:#bdbdbd;"></div>
<div class="b" style="left:258px;top:730px;width:1px;height:21px;background:#bdbdbd;"></div>
<div class="b" style="left:358px;top:730px;width:1px;height:21px;background:#bdbdbd;"></div>
<div class="b" style="left:458px;top:730px;width:1px;height:21px;background:#bdbdbd;"></div>
<div class="b" style="left:558px;top:730px;width:1px;height:21px;background:#bdbdbd;"></div>
<div class="b" style="left:618px;top:730px;width:1px;height:21px;background:#bdbdbd;"></div>
<div class="b" style="left:768px;top:730px;width:1px;height:21px;background:#bdbdbd;"></div>
<div class="b" style="left:0px;top:752px;width:870px;height:21px;background:#ffff00;"></div>
<div class="b" style="left:0px;top:773px;width:870px;height:1px;background:rgba(190,190,190,0.75);"></div>
<div class="b" style="left:48px;top:752px;width:1px;height:21px;background:rgba(220,220,220,0.6);"></div>
<div class="b" style="left:198px;top:752px;width:1px;height:21px;background:rgba(220,220,220,0.6);"></div>
<div class="b" style="left:258px;top:752px;width:1px;height:21px;background:rgba(220,220,220,0.6);"></div>
<div class="b" style="left:358px;top:752px;width:1px;height:21px;background:rgba(220,220,220,0.6);"></div>
<div class="b" style="left:458px;top:752px;width:1px;height:21px;background:rgba(220,220,220,0.6);"></div>
<div class="b" style="left:558px;top:752px;width:1px;height:21px;background:rgba(220,220,220,0.6);"></div>
<div class="b" style="left:618px;top:752px;width:1px;height:21px;background:rgba(220,220,220,0.6);"></div>
<div class="b" style="left:768px;top:752px;width:1px;height:21px;background:rgba(220,220,220,0.6);"></div>
<div class="b" style="left:0px;top:774px;width:870px;height:21px;background:#ffffff;"></div>
<div class="b" style="left:0px;top:795px;width:870px;height:1px;background:#d0d0d0;"></div>
<div class="b" style="left:48px;top:774px;width:1px;height:21px;background:#bdbdbd;"></div>
<div class="b" style="left:198px;top:774px;width:1px;height:21px;background:#bdbdbd;"></div>
<div class="b" style="left:258px;top:774px;width:1px;height:21px;background:#bdbdbd;"></div>
<div class="b" style="left:358px;top:774px;width:1px;height:21px;background:#bdbdbd;"></div>
<div class="b" style="left:458px;top:774px;width:1px;height:21px;background:#bdbdbd;"></div>
<div class="b" style="left:558px;top:774px;width:1px;height:21px;background:#bdbdbd;"></div>
<div class="b" style="left:618px;top:774px;width:1px;height:21px;background:#bdbdbd;"></div>
<div class="b" style="left:768px;top:774px;width:1px;height:21px;background:#bdbdbd;"></div>
<div class="t" style="top:29.00px;left:1.92px;transform:scaleX(0.8825);">INTES</div>
<div class="t" style="top:29.00px;left:51.40px;transform:scaleX(0.9012);">INTESA SAN PAOLO SPA</div>
<div class="t" style="top:29.00px;left:202.60px;transform:scaleX(0.8400);">CU</div>
<div class="t" style="top:29.00px;left:262.50px;transform:scaleX(0.9631);">15/11/2019</div>
<div class="t" style="top:29.00px;left:362.20px;transform:scaleX(0.9715);">14/11/2019</div>
<div class="t" style="top:29.00px;color:#000;right:314.08px;transform:scaleX(0.8563);transform-origin:100% 0;">-0,75</div>
<div class="t" style="top:29.00px;left:562.80px;transform:scaleX(0.8410);">16</div>
<div class="t" style="top:29.00px;left:622.40px;transform:scaleX(0.8659);">COSTO PER</div>
<div class="t" style="top:51.00px;left:1.92px;transform:scaleX(0.8825);">INTES</div>
<div class="t" style="top:51.00px;left:51.40px;transform:scaleX(0.9012);">INTESA SAN PAOLO SPA</div>
<div class="t" style="top:51.00px;left:202.60px;transform:scaleX(0.8400);">CU</div>
<div class="t" style="top:51.00px;left:262.50px;transform:scaleX(0.9631);">15/11/2019</div>
<div class="t" style="top:51.00px;left:362.20px;transform:scaleX(0.9715);">14/11/2019</div>
<div class="t" style="top:51.00px;color:#b41e22;right:314.08px;transform:scaleX(0.8563);transform-origin:100% 0;">-0,75</div>
<div class="t" style="top:51.00px;left:562.80px;transform:scaleX(0.8410);">16</div>
<div class="t" style="top:51.00px;left:622.40px;transform:scaleX(0.8659);">COSTO PER</div>
<div class="t" style="top:73.00px;left:1.92px;transform:scaleX(0.8825);">INTES</div>
<div class="t" style="top:73.00px;left:51.40px;transform:scaleX(0.9012);">INTESA SAN PAOLO SPA</div>
<div class="t" style="top:73.00px;left:202.60px;transform:scaleX(0.8400);">CU</div>
<div class="t" style="top:73.00px;left:262.50px;transform:scaleX(0.9631);">15/11/2019</div>
<div class="t" style="top:73.00px;left:362.20px;transform:scaleX(0.9715);">14/11/2019</div>
<div class="t" style="top:73.00px;color:#b41e22;right:314.08px;transform:scaleX(0.8563);transform-origin:100% 0;">-3,00</div>
<div class="t" style="top:73.00px;left:562.80px;transform:scaleX(0.8410);">16</div>
<div class="t" style="top:73.00px;left:622.40px;transform:scaleX(0.8659);">COSTO PER</div>
<div class="t" style="top:29.00px;left:772.50px;transform:scaleX(0.8952);">ONERI FINANZ</div>
<div class="t" style="top:51.00px;left:772.50px;transform:scaleX(0.8952);">ONERI FINANZ</div>
<div class="t" style="top:73.00px;left:772.50px;transform:scaleX(0.8952);">ONERI FINANZ</div>
<div class="t" style="top:95.00px;left:772.50px;transform:scaleX(0.8952);">ONERI FINANZ</div>
<div class="t" style="top:117.00px;left:772.50px;transform:scaleX(0.8952);">ONERI FINANZ</div>
<div class="t" style="top:139.00px;left:772.50px;transform:scaleX(0.8952);">ONERI FINANZ</div>
<div class="t" style="top:161.00px;left:772.50px;transform:scaleX(0.8952);">ONERI FINANZ</div>
<div class="t" style="top:205.00px;left:772.50px;transform:scaleX(0.8952);">ONERI FINANZ</div>
<div class="t" style="top:227.00px;left:772.50px;transform:scaleX(0.8952);">ONERI FINANZ</div>
<div class="t" style="top:249.00px;left:772.50px;transform:scaleX(0.8952);">ONERI FINANZ</div>
<div class="t" style="top:271.00px;left:772.50px;transform:scaleX(0.8952);">ONERI FINANZ</div>
<div class="t" style="top:293.00px;left:772.50px;transform:scaleX(0.8952);">ONERI FINANZ</div>
<div class="t" style="top:293.00px;right:105.51px;transform:scaleX(0.8813);transform-origin:100% 0;">TO</div>
<div class="t" style="top:315.00px;left:772.50px;transform:scaleX(0.8952);">ONERI FINANZ</div>
<div class="t" style="top:315.00px;right:105.51px;transform:scaleX(0.8813);transform-origin:100% 0;">TO</div>
<div class="t" style="top:337.00px;left:772.50px;transform:scaleX(0.8952);">ONERI FINANZ</div>
<div class="t" style="top:359.00px;left:772.50px;transform:scaleX(0.8952);">ONERI FINANZ</div>
<div class="t" style="top:359.00px;right:105.51px;transform:scaleX(0.8813);transform-origin:100% 0;">TO</div>
<div class="t" style="top:381.00px;left:772.50px;transform:scaleX(0.8952);">ONERI FINANZ</div>
<div class="t" style="top:403.00px;left:772.50px;transform:scaleX(0.8952);">ONERI FINANZ</div>
<div class="t" style="top:425.00px;left:772.50px;transform:scaleX(0.8952);">ONERI FINANZ</div>
<div class="t" style="top:447.00px;left:772.50px;transform:scaleX(0.8952);">ONERI FINANZ</div>
<div class="t" style="top:447.00px;right:105.51px;transform:scaleX(0.8813);transform-origin:100% 0;">TO</div>
<div class="t" style="top:469.00px;left:772.50px;transform:scaleX(0.8952);">ONERI FINANZ</div>
<div class="t" style="top:469.00px;right:105.51px;transform:scaleX(0.8813);transform-origin:100% 0;">TO</div>
<div class="t" style="top:491.00px;left:772.50px;transform:scaleX(0.8952);">ONERI FINANZ</div>
<div class="t" style="top:491.00px;right:105.51px;transform:scaleX(0.8813);transform-origin:100% 0;">TO</div>
<div class="t" style="top:513.00px;left:772.50px;transform:scaleX(0.8952);">ONERI FINANZ</div>
<div class="t" style="top:535.00px;left:772.50px;transform:scaleX(0.8952);">ONERI FINANZ</div>
<div class="t" style="top:557.00px;left:772.50px;transform:scaleX(0.8952);">ONERI FINANZ</div>
<div class="t" style="top:579.00px;left:772.50px;transform:scaleX(0.8952);">ONERI FINANZ</div>
<div class="t" style="top:601.00px;left:772.50px;transform:scaleX(0.8952);">ONERI FINANZ</div>
<div class="t" style="top:601.00px;right:105.51px;transform:scaleX(0.8813);transform-origin:100% 0;">TO</div>
<div class="t" style="top:623.00px;left:772.50px;transform:scaleX(0.8952);">ONERI FINANZ</div>
<div class="t" style="top:623.00px;right:105.51px;transform:scaleX(0.8813);transform-origin:100% 0;">TO</div>
<div class="t" style="top:645.00px;left:772.50px;transform:scaleX(0.8952);">ONERI FINANZ</div>
<div class="t" style="top:667.00px;left:772.50px;transform:scaleX(0.8952);">ONERI FINANZ</div>
<div class="t" style="top:689.00px;left:772.50px;transform:scaleX(0.8952);">ONERI FINANZ</div>
<div class="t" style="top:711.00px;left:772.50px;transform:scaleX(0.8952);">ONERI FINANZ</div>
<div class="t" style="top:711.00px;right:109.79px;transform:scaleX(0.9000);transform-origin:100% 0;">o</div>
<div class="t" style="top:733.00px;left:772.50px;transform:scaleX(0.8952);">ONERI FINANZ</div>
<div class="t" style="top:755.00px;left:772.50px;transform:scaleX(0.8952);">ONERI FINANZ</div>
<div class="t" style="top:755.00px;right:109.79px;transform:scaleX(0.9000);transform-origin:100% 0;">o</div>
<div class="t" style="top:777.00px;left:772.50px;transform:scaleX(0.8952);">ONERI FINANZ</div>
<div id="dlg"><div id="dlgin">
<div class="b" style="left:0px;top:114px;width:755px;height:674px;background:#f0f0f0;"></div>
<div class="b" style="left:0px;top:89px;width:755px;height:25px;background:#ffffff;"></div>
<div class="t" style="top:94.04px;font-size:12.5px;color:#999999;left:-1.00px;">- Movimento HB -[Modalità Aggiornamento]</div>
<svg style="position:absolute;left:734px;top:95px" width="12" height="12"><path d="M1 1L11 11M11 1L1 11" stroke="#8e8e8e" stroke-width="1"/></svg>
<div class="b" style="left:-5px;top:120px;width:601px;height:293px;border:1px solid #d9d9d9;"></div>
<div class="b" style="left:4.6px;top:117px;width:42.0px;height:7px;background:#f0f0f0;"></div>
<div class="t" style="top:114.00px;left:7.60px;transform:scaleX(0.8612);">Dati HB</div>
<div class="b" style="left:-5px;top:449px;width:306px;height:89px;border:1px solid #d9d9d9;"></div>
<div class="b" style="left:4.7px;top:446px;width:77.0px;height:7px;background:#f0f0f0;"></div>
<div class="t" style="top:443.00px;left:7.70px;transform:scaleX(0.8760);">Riconciliazione</div>
<div class="b" style="left:305px;top:449px;width:495px;height:89px;border:1px solid #d9d9d9;"></div>
<div class="b" style="left:314px;top:446px;width:62px;height:7px;background:#f0f0f0;"></div>
<div class="t" style="top:443.00px;left:317.00px;transform:scaleX(0.8403);">Contabilizza</div>
<div class="b" style="left:-5px;top:545px;width:306px;height:65px;border:1px solid #d9d9d9;"></div>
<div class="b" style="left:4.3px;top:542px;width:63.0px;height:7px;background:#f0f0f0;"></div>
<div class="t" style="top:539.00px;left:7.30px;transform:scaleX(0.8719);">Elaborazioni</div>
<div class="b" style="left:305px;top:545px;width:495px;height:65px;border:1px solid #d9d9d9;"></div>
<div class="b" style="left:313.9px;top:542px;width:88.0px;height:7px;background:#f0f0f0;"></div>
<div class="t" style="top:539.00px;left:316.90px;transform:scaleX(0.8353);">Dati di immissione</div>
<div class="b" style="left:-5px;top:617px;width:805px;height:113px;border:1px solid #d9d9d9;"></div>
<div class="b" style="left:4.4px;top:614px;width:48.0px;height:7px;background:#f0f0f0;"></div>
<div class="t" style="top:611.00px;left:7.40px;transform:scaleX(0.8850);">C/Partite</div>
<div class="t" style="top:134.00px;left:11.50px;transform:scaleX(0.8913);">Banca:</div>
<div class="t" style="top:158.50px;left:11.50px;transform:scaleX(0.8652);">Linea:</div>
<div class="t" style="top:182.50px;left:11.50px;transform:scaleX(0.8788);">Divisa</div>
<div class="b" style="left:116px;top:131px;width:61px;height:19px;background:#fff;border:1px solid #f3f3f3;border-bottom:1px solid #e4e4e4;"></div>
<div class="b" style="left:180px;top:131px;width:134px;height:19px;background:#fff;border:1px solid #f3f3f3;border-bottom:1px solid #e4e4e4;"></div>
<div class="b" style="left:177px;top:132px;width:3px;height:17px;background:#a8a8a8;"></div>
<div class="t" style="top:133.00px;color:#6d6d6d;left:116.30px;transform:scaleX(0.9000);">INTES</div>
<div class="t" style="top:133.00px;color:#6d6d6d;left:181.51px;transform:scaleX(0.8942);">INTESA SAN PAOLO S</div>
<div class="b" style="left:299px;top:133px;width:14px;height:14px;background:#fdfdfd;border:1px solid #b9b9b9;border-radius:3px"></div>
<div class="b" style="left:303px;top:143px;width:2px;height:2px;background:#000;"></div>
<div class="b" style="left:306px;top:143px;width:2px;height:2px;background:#000;"></div>
<div class="b" style="left:309px;top:143px;width:2px;height:2px;background:#000;"></div>
<div class="b" style="left:116px;top:156px;width:61px;height:19px;background:#fff;border:1px solid #f3f3f3;border-bottom:1px solid #e4e4e4;"></div>
<div class="b" style="left:180px;top:156px;width:134px;height:19px;background:#fff;border:1px solid #f3f3f3;border-bottom:1px solid #e4e4e4;"></div>
<div class="b" style="left:177px;top:157px;width:3px;height:17px;background:#a8a8a8;"></div>
<div class="t" style="top:157.50px;color:#6d6d6d;left:117.20px;transform:scaleX(0.8400);">CU</div>
<div class="t" style="top:157.50px;color:#6d6d6d;left:182.40px;transform:scaleX(0.8980);">C/corrente</div>
<div class="b" style="left:299px;top:158px;width:14px;height:14px;background:#fdfdfd;border:1px solid #b9b9b9;border-radius:3px"></div>
<div class="b" style="left:303px;top:168px;width:2px;height:2px;background:#000;"></div>
<div class="b" style="left:306px;top:168px;width:2px;height:2px;background:#000;"></div>
<div class="b" style="left:309px;top:168px;width:2px;height:2px;background:#000;"></div>
<div class="b" style="left:116px;top:180px;width:61px;height:19px;background:#fff;border:1px solid #f3f3f3;border-bottom:1px solid #e4e4e4;"></div>
<div class="b" style="left:180px;top:180px;width:134px;height:19px;background:#fff;border:1px solid #f3f3f3;border-bottom:1px solid #e4e4e4;"></div>
<div class="b" style="left:177px;top:181px;width:3px;height:17px;background:#a8a8a8;"></div>
<div class="t" style="top:181.50px;color:#6d6d6d;left:117.20px;transform:scaleX(0.8672);">ALL</div>
<div class="t" style="top:181.50px;color:#6d6d6d;left:182.40px;transform:scaleX(0.8875);">Tutte le divise</div>
<div class="b" style="left:299px;top:182px;width:14px;height:14px;background:#fdfdfd;border:1px solid #b9b9b9;border-radius:3px"></div>
<div class="b" style="left:303px;top:192px;width:2px;height:2px;background:#000;"></div>
<div class="b" style="left:306px;top:192px;width:2px;height:2px;background:#000;"></div>
<div class="b" style="left:309px;top:192px;width:2px;height:2px;background:#000;"></div>
<div class="b" style="left:322px;top:132px;width:13px;height:64px;background:#f5f5f5;border:1px solid #e2e2e2;border-radius:2px;"></div>
<div class="b" style="left:324px;top:166px;width:2px;height:2px;background:#a0a0a0;"></div>
<div class="b" style="left:327px;top:166px;width:2px;height:2px;background:#a0a0a0;"></div>
<div class="b" style="left:330px;top:166px;width:2px;height:2px;background:#a0a0a0;"></div>
<div class="t" style="top:158.00px;left:363.50px;transform:scaleX(0.8712);">Data operazione</div>
<div class="t" style="top:182.50px;left:363.50px;transform:scaleX(0.8930);">Data valuta</div>
<div class="b" style="left:478px;top:156px;width:109px;height:18px;background:#fff;border:1px solid #ececec;border-bottom:1px solid #808080;"></div>
<div class="t" style="top:156.50px;left:480.70px;transform:scaleX(0.9665);">15/11/2019</div>
<div class="b" style="left:571px;top:158px;width:14px;height:14px;background:#fdfdfd;border:1px solid #b9b9b9;border-radius:3px"></div>
<div class="b" style="left:575px;top:168px;width:2px;height:2px;background:#000;"></div>
<div class="b" style="left:578px;top:168px;width:2px;height:2px;background:#000;"></div>
<div class="b" style="left:581px;top:168px;width:2px;height:2px;background:#000;"></div>
<div class="b" style="left:478px;top:180px;width:109px;height:20px;background:#fff;border:1px solid #ececec;border-bottom:1px solid #808080;"></div>
<div class="t" style="top:181.00px;left:480.70px;transform:scaleX(0.9665);">14/11/2019</div>
<div class="b" style="left:571px;top:182px;width:14px;height:14px;background:#fdfdfd;border:1px solid #b9b9b9;border-radius:3px"></div>
<div class="b" style="left:575px;top:192px;width:2px;height:2px;background:#000;"></div>
<div class="b" style="left:578px;top:192px;width:2px;height:2px;background:#000;"></div>
<div class="b" style="left:581px;top:192px;width:2px;height:2px;background:#000;"></div>
<div class="t" style="top:213.50px;left:10.63px;transform:scaleX(0.8700);">Importo dare</div>
<div class="t" style="top:238.00px;left:10.61px;transform:scaleX(0.8860);">Importo avere</div>
<div class="b" style="left:116px;top:211px;width:144px;height:17px;background:#fff;border:1px solid #f3f3f3;border-bottom:1px solid #e4e4e4;"></div>
<div class="t" style="top:213.00px;color:#6d6d6d;right:612.79px;transform:scaleX(0.8741);transform-origin:100% 0;">0,00</div>
<div class="b" style="left:116px;top:235px;width:144px;height:19px;background:#fff;border:1px solid #ececec;border-bottom:1px solid #808080;"></div>
<div class="t" style="top:237.00px;right:612.79px;transform:scaleX(0.8741);transform-origin:100% 0;">0,75</div>
<div class="t" style="top:213.50px;left:291.40px;transform:scaleX(0.8665);">Descrizione</div>
<div class="t" style="top:238.00px;left:290.53px;transform:scaleX(0.8738);">Importo Spese</div>
<div class="b" style="left:365px;top:211px;width:223px;height:20px;background:#fff;border:1px solid #ececec;border-bottom:1px solid #808080;"></div>
<div class="t" style="top:212.50px;left:367.30px;transform:scaleX(0.8687);">COSTO PER BONIFICO</div>
<div class="b" style="left:364px;top:235px;width:72px;height:19px;background:#fff;border:1px solid #ececec;border-bottom:1px solid #808080;"></div>
<div class="t" style="top:236.50px;right:436.18px;transform:scaleX(0.8530);transform-origin:100% 0;">0,00</div>
<div class="t" style="top:270.00px;left:11.50px;transform:scaleX(0.8634);">Causale ABI</div>
<div class="b" style="left:116px;top:267px;width:472px;height:20px;background:#fff;border:1px solid #ececec;border-bottom:1px solid #808080;"></div>
<div class="b" style="left:157px;top:268px;width:3px;height:18px;background:#a8a8a8;"></div>
<div class="t" style="top:268.50px;left:118.00px;transform:scaleX(0.7971);">16</div>
<div class="t" style="top:269.80px;left:162.90px;transform:scaleX(0.8278);">Commissioni</div>
<div class="b" style="left:572px;top:269px;width:14px;height:14px;background:#fdfdfd;border:1px solid #b9b9b9;border-radius:3px"></div>
<div class="b" style="left:576px;top:279px;width:2px;height:2px;background:#000;"></div>
<div class="b" style="left:579px;top:279px;width:2px;height:2px;background:#000;"></div>
<div class="b" style="left:582px;top:279px;width:2px;height:2px;background:#000;"></div>
<div class="t" style="top:293.50px;left:11.50px;transform:scaleX(0.8418);">ABI</div>
<div class="b" style="left:116px;top:290px;width:280px;height:21px;background:#fff;border:1px solid #ececec;border-bottom:1px solid #808080;"></div>
<div class="b" style="left:187px;top:292px;width:3px;height:18px;background:#a8a8a8;"></div>
<div class="t" style="top:292.50px;left:117.60px;transform:scaleX(0.8666);">03069</div>
<div class="t" style="top:293.50px;left:191.40px;transform:scaleX(0.8990);">INTESA SANPAOLO SPA</div>
<div class="b" style="left:381px;top:293px;width:14px;height:14px;background:#fdfdfd;border:1px solid #b9b9b9;border-radius:3px"></div>
<div class="b" style="left:385px;top:303px;width:2px;height:2px;background:#000;"></div>
<div class="b" style="left:388px;top:303px;width:2px;height:2px;background:#000;"></div>
<div class="b" style="left:391px;top:303px;width:2px;height:2px;background:#000;"></div>
<div class="t" style="top:294.00px;left:418.90px;transform:scaleX(1.0369);">c/c</div>
<div class="b" style="left:444px;top:291px;width:144px;height:20px;background:#fff;border:1px solid #ececec;border-bottom:1px solid #808080;"></div>
<div class="t" style="top:318.50px;left:10.50px;transform:scaleX(0.8751);">Descrizione estesa</div>
<div class="b" style="left:116px;top:316px;width:472px;height:90px;background:#fff;border:1px solid #ececec;border-bottom:1px solid #808080;"></div>
<div class="b" style="left:571px;top:317px;width:16px;height:88px;background:#f0f0f0;"></div>
<svg style="position:absolute;left:574.5px;top:321px" width="10" height="80"><path d="M0.3 7.8L4.5 2L8.7 7.8Z" fill="#a0a0a0"/><path d="M0.3 72L4.5 77.8L8.7 72Z" fill="#a0a0a0"/></svg>
<div class="t" style="top:317.00px;left:119.20px;transform:scaleX(0.8927);">COSTO PER BONIFICO/NC/0306926644067204486297262972IT</div>
<div class="t" style="top:330.10px;left:119.80px;transform:scaleX(0.9189);">/BA/03069/BC/62972/BB/DELOITTE FINANCIAL ADVISORY SRL/MP/COMMISSIONISU</div>
<div class="t" style="top:343.20px;left:119.20px;transform:scaleX(0.8958);">VS.DISPOSIZIONI RIF. PRESENT. DI EUR 86.864,00 PER 1 BONIFICI TOTALE</div>
<div class="t" style="top:356.30px;left:119.20px;transform:scaleX(0.9255);">COMMISSIONI EUR 0,75 448/RC/448/DR/20191113/OB/MORATO PANE</div>
<div class="t" style="top:369.40px;left:119.20px;transform:scaleX(0.9205);">SPA/RO/AH00220191114URMC50000751796/RR/BONSCT201911130774455</div>
<div class="b" style="left:609px;top:380px;width:78px;height:22px;background:#fbfbfb;border:1px solid #c9c9c9;border-radius:3px;"></div>
<div class="t" style="top:384.00px;left:628.30px;transform:scaleX(0.9043);">Sblocca</div>
<div class="t" style="top:422.00px;left:18.60px;transform:scaleX(0.8496);">Riferimento</div>
<div class="b" style="left:116px;top:419px;width:479px;height:20px;background:#fff;border:1px solid #ececec;border-bottom:1px solid #808080;"></div>
<div class="t" style="top:465.00px;left:10.50px;transform:scaleX(0.8900);">Riconciliato</div>
<div class="b" style="left:116px;top:465px;width:13px;height:13px;border:1px solid #555;border-radius:2px;background:#f4f4f4;"></div>
<div class="t" style="top:463.50px;left:164.10px;transform:scaleX(0.8698);">Tipo</div>
<div class="b" style="left:190px;top:460px;width:22px;height:20px;background:#fff;border:1px solid #ececec;border-bottom:1px solid #808080;"></div>
<div class="t" style="top:463.50px;left:228.00px;transform:scaleX(0.8062);">Trim.</div>
<div class="b" style="left:269px;top:460px;width:22px;height:20px;background:#fff;border:1px solid #ececec;border-bottom:1px solid #808080;"></div>
<div class="t" style="top:488.00px;left:11.60px;transform:scaleX(0.8771);">Num. colleg.</div>
<div class="b" style="left:117px;top:485px;width:95px;height:20px;background:#fff;border:1px solid #ececec;border-bottom:1px solid #808080;"></div>
<div class="t" style="top:487.00px;right:660.59px;transform:scaleX(0.9000);transform-origin:100% 0;">0</div>
<div class="t" style="top:487.50px;left:226.90px;transform:scaleX(0.8837);">ANP</div>
<div class="b" style="left:269px;top:484px;width:22px;height:20px;background:#fff;border:1px solid #ececec;border-bottom:1px solid #808080;"></div>
<div class="t" style="top:463.00px;left:320.70px;transform:scaleX(0.8619);">Modello</div>
<div class="b" style="left:394px;top:460px;width:199px;height:20px;background:#fff;border:1px solid #ececec;border-bottom:1px solid #808080;"></div>
<div class="b" style="left:435px;top:461px;width:3px;height:18px;background:#a8a8a8;"></div>
<div class="t" style="top:462.00px;left:395.20px;transform:scaleX(0.8302);">G01</div>
<div class="t" style="top:463.00px;left:441.00px;transform:scaleX(0.8756);">Commissioni e spese c/c</div>
<div class="b" style="left:577px;top:462px;width:14px;height:14px;background:#fdfdfd;border:1px solid #b9b9b9;border-radius:3px"></div>
<div class="b" style="left:581px;top:472px;width:2px;height:2px;background:#000;"></div>
<div class="b" style="left:584px;top:472px;width:2px;height:2px;background:#000;"></div>
<div class="b" style="left:587px;top:472px;width:2px;height:2px;background:#000;"></div>
<div class="t" style="top:487.50px;left:320.70px;transform:scaleX(0.8270);">Caus. COGE</div>
<div class="b" style="left:394px;top:485px;width:199px;height:20px;background:#fff;border:1px solid #ececec;border-bottom:1px solid #808080;"></div>
<div class="b" style="left:435px;top:486px;width:3px;height:18px;background:#a8a8a8;"></div>
<div class="b" style="left:577px;top:487px;width:14px;height:14px;background:#fdfdfd;border:1px solid #b9b9b9;border-radius:3px"></div>
<div class="b" style="left:581px;top:497px;width:2px;height:2px;background:#000;"></div>
<div class="b" style="left:584px;top:497px;width:2px;height:2px;background:#000;"></div>
<div class="b" style="left:587px;top:497px;width:2px;height:2px;background:#000;"></div>
<div class="t" style="top:512.00px;left:320.70px;transform:scaleX(0.8779);">Profit center</div>
<div class="b" style="left:394px;top:510px;width:199px;height:19px;background:#fff;border:1px solid #ececec;border-bottom:1px solid #808080;"></div>
<div class="b" style="left:495px;top:511px;width:3px;height:17px;background:#a8a8a8;"></div>
<div class="b" style="left:577px;top:511px;width:14px;height:14px;background:#fdfdfd;border:1px solid #b9b9b9;border-radius:3px"></div>
<div class="b" style="left:581px;top:521px;width:2px;height:2px;background:#000;"></div>
<div class="b" style="left:584px;top:521px;width:2px;height:2px;background:#000;"></div>
<div class="b" style="left:587px;top:521px;width:2px;height:2px;background:#000;"></div>
<div class="t" style="top:558.50px;left:11.40px;transform:scaleX(0.8611);">Passato in tesoreria</div>
<div class="b" style="left:118px;top:556px;width:174px;height:20px;background:#fff;border:1px solid #ececec;border-bottom:1px solid #808080;"></div>
<div class="b" style="left:139px;top:557px;width:3px;height:18px;background:#a8a8a8;"></div>
<div class="t" style="top:558.00px;left:120.00px;transform:scaleX(0.7875);">N</div>
<div class="t" style="top:559.00px;left:144.80px;transform:scaleX(0.8744);">Non elaborato</div>
<div class="b" style="left:276px;top:558px;width:14px;height:14px;background:#fdfdfd;border:1px solid #b9b9b9;border-radius:3px"></div>
<div class="b" style="left:280px;top:568px;width:2px;height:2px;background:#000;"></div>
<div class="b" style="left:283px;top:568px;width:2px;height:2px;background:#000;"></div>
<div class="b" style="left:286px;top:568px;width:2px;height:2px;background:#000;"></div>
<div class="t" style="top:584.50px;left:9.70px;transform:scaleX(0.8832);">Passato in contab.</div>
<div class="b" style="left:117px;top:585px;width:13px;height:13px;border:1px solid #555;border-radius:2px;background:#f4f4f4;"></div>
<div class="t" style="top:584.50px;left:169.30px;transform:scaleX(0.8937);">C/Partita verificata</div>
<div class="b" style="left:277px;top:585px;width:13px;height:13px;border:1px solid #555;border-radius:2px;background:#f4f4f4;"></div>
<div class="t" style="top:558.50px;left:320.30px;transform:scaleX(0.8912);">Utente</div>
<div class="b" style="left:396px;top:556px;width:143px;height:20px;background:#fff;border:1px solid #ececec;border-bottom:1px solid #808080;"></div>
<div class="t" style="top:583.00px;left:320.30px;transform:scaleX(0.8686);">Data</div>
<div class="b" style="left:396px;top:581px;width:104px;height:18px;background:#fff;border:1px solid #ececec;border-bottom:1px solid #808080;"></div>
<div class="t" style="top:582.00px;left:398.50px;transform:scaleX(0.9665);">18/11/2019</div>
<div class="b" style="left:484px;top:583px;width:14px;height:14px;background:#fdfdfd;border:1px solid #b9b9b9;border-radius:3px"></div>
<div class="b" style="left:488px;top:593px;width:2px;height:2px;background:#000;"></div>
<div class="b" style="left:491px;top:593px;width:2px;height:2px;background:#000;"></div>
<div class="b" style="left:494px;top:593px;width:2px;height:2px;background:#000;"></div>
<div class="b" style="left:-5px;top:626px;width:603px;height:104px;background:#fff;border:1px solid #a7a7a7;"></div>
<div class="b" style="left:0px;top:627px;width:11px;height:18px;background:#f0f0f0;border-top:1px solid #fbfbfb;border-left:1px solid #fbfbfb;border-bottom:1px solid #d6d6d6;border-right:1px solid #d6d6d6;"></div>
<div class="b" style="left:12px;top:627px;width:83px;height:18px;background:#f0f0f0;border-top:1px solid #fbfbfb;border-left:1px solid #fbfbfb;border-bottom:1px solid #d6d6d6;border-right:1px solid #d6d6d6;"></div>
<div class="b" style="left:96px;top:627px;width:289px;height:18px;background:#f0f0f0;border-top:1px solid #fbfbfb;border-left:1px solid #fbfbfb;border-bottom:1px solid #d6d6d6;border-right:1px solid #d6d6d6;"></div>
<div class="b" style="left:386px;top:627px;width:205px;height:18px;background:#f0f0f0;border-top:1px solid #fbfbfb;border-left:1px solid #fbfbfb;border-bottom:1px solid #d6d6d6;border-right:1px solid #d6d6d6;"></div>
<div class="b" style="left:0px;top:645px;width:592px;height:1px;background:#141414;"></div>
<div class="b" style="left:11px;top:627px;width:1px;height:18px;background:#141414;"></div>
<div class="b" style="left:95px;top:627px;width:1px;height:18px;background:#141414;"></div>
<div class="b" style="left:385px;top:627px;width:1px;height:18px;background:#141414;"></div>
<div class="b" style="left:591px;top:627px;width:1px;height:18px;background:#141414;"></div>
<div class="b" style="left:11px;top:645px;width:1px;height:19px;background:#141414;"></div>
<div class="b" style="left:0px;top:646px;width:11px;height:17px;background:#f0f0f0;border-top:1px solid #fbfbfb;border-bottom:1px solid #d6d6d6;border-right:1px solid #d6d6d6;"></div>
<div class="b" style="left:0px;top:663px;width:12px;height:1px;background:#141414;"></div>
<div class="b" style="left:12px;top:663px;width:580px;height:1px;background:#a9a9a9;"></div>
<div class="b" style="left:95px;top:646px;width:1px;height:17px;background:#c9c9c9;"></div>
<div class="b" style="left:385px;top:646px;width:1px;height:17px;background:#c9c9c9;"></div>
<div class="b" style="left:591px;top:646px;width:1px;height:17px;background:#c9c9c9;"></div>
<svg style="position:absolute;left:0px;top:646px" width="12" height="18"><path d="M3 3L9.5 8.5L3 14Z" fill="#000"/></svg>
<div class="t" style="top:629.70px;left:13.43px;transform:scaleX(0.8673);">Importo</div>
<div class="t" style="top:629.70px;left:98.90px;transform:scaleX(0.8701);">C/Partita</div>
<div class="t" style="top:629.50px;left:388.60px;transform:scaleX(0.8583);">Causale raggr.</div>
<div class="t" style="top:647.30px;right:778.27px;transform:scaleX(0.8310);transform-origin:100% 0;">-0,75</div>
<div class="t" style="top:647.50px;left:99.50px;transform:scaleX(0.8877);">ONERI FINANZ - ONERI FINANZIARI</div>
<div class="t" style="top:642.00px;left:614.10px;transform:scaleX(0.8965);">Totale</div>
<div class="b" style="left:663px;top:639px;width:79px;height:18px;background:#fff;border:1px solid #f3f3f3;border-bottom:1px solid #e4e4e4;"></div>
<div class="t" style="top:641.50px;color:#6d6d6d;right:130.98px;transform:scaleX(0.8454);transform-origin:100% 0;">-0,75</div>
<div class="t" style="top:673.70px;left:614.00px;transform:scaleX(0.8590);">Residuo</div>
<div class="b" style="left:663px;top:671px;width:79px;height:18px;background:#fff;border:1px solid #f3f3f3;border-bottom:1px solid #e4e4e4;"></div>
<div class="t" style="top:672.50px;color:#6d6d6d;right:130.98px;transform:scaleX(0.8572);transform-origin:100% 0;">0,00</div>
<div class="b" style="left:27px;top:741px;width:73px;height:23px;background:#fcfcfe;border:1px solid #2b6593;border-radius:3px;box-shadow:0 0 0 1px #dff3fc, inset 0 0 0 1px #f0fbff;"></div>
<div class="t" style="top:746.00px;left:50.80px;transform:scaleX(0.8667);">Salva</div>
<div class="b" style="left:117px;top:741px;width:72px;height:23px;background:#fdfdfd;border:1px solid #cfcfcf;border-radius:4px;"></div>
<div class="t" style="top:746.00px;left:131.70px;transform:scaleX(0.8442);">Ripristina</div>
<div class="b" style="left:205px;top:741px;width:73px;height:23px;background:#fdfdfd;border:1px solid #cfcfcf;border-radius:4px;"></div>
<div class="t" style="top:746.00px;left:232.10px;transform:scaleX(0.9135);">Esci</div>
<svg style="position:absolute;left:0;top:0" width="870" height="788"><path d="M165.5 599 C170 598.5 180 600 187 600.5 L251.5 602.9 C265 603.5 275 604 281.5 604.5 L281.5 619.8 C270 619.5 260 619 251.5 618.2 L190 615.5 C180 615 172 614.2 165.5 614 Z" fill="#f0ec00" fill-opacity="0.93"/><path d="M86 664.2 C120 664.3 160 664.5 200 664.8 C250 665.2 290 665.6 313 665.9 L313 680.9 C280 680.6 240 680 190 679.4 C150 679 110 678.4 86 678 Z" fill="#ffe500"/></svg>
</div></div>
</body></html>
